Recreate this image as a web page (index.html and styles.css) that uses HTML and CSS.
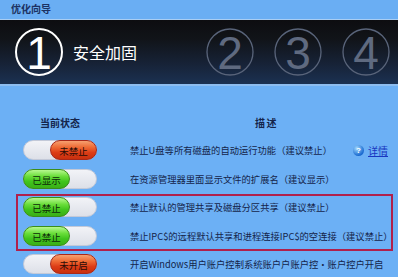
FILE: index.html
```html
<!DOCTYPE html>
<html>
<head>
<meta charset="utf-8">
<link rel="stylesheet" href="styles.css">
</head>
<body>
<div class="win">
  <div class="titlebar">优化向导</div>
  <div class="steps">
    <svg class="num" width="50" height="50" viewBox="0 0 50 50">
      <circle cx="25" cy="25" r="23" fill="none" stroke="#ffffff" stroke-width="2"/>
      <text x="25" y="41.5" text-anchor="middle" class="digit on">1</text>
    </svg>
    <span class="step-title">安全加固</span>
    <div class="todo">
      <svg class="num" width="50" height="50" viewBox="0 0 50 50">
        <circle cx="25" cy="25" r="23" fill="none" stroke="#59647a" stroke-width="1.3"/>
        <text x="25" y="41.5" text-anchor="middle" class="digit off">2</text>
      </svg>
      <svg class="num" width="50" height="50" viewBox="0 0 50 50">
        <circle cx="25" cy="25" r="23" fill="none" stroke="#59647a" stroke-width="1.3"/>
        <text x="25" y="41.5" text-anchor="middle" class="digit off">3</text>
      </svg>
      <svg class="num" width="50" height="50" viewBox="0 0 50 50">
        <circle cx="25" cy="25" r="23" fill="none" stroke="#59647a" stroke-width="1.3"/>
        <text x="25" y="41.5" text-anchor="middle" class="digit off">4</text>
      </svg>
    </div>
  </div>
  <div class="content">
    <div class="head">
      <span class="h-state">当前状态</span>
      <span class="h-desc">描述</span>
    </div>
    <div class="rows">
      <div class="row">
        <div class="toggle right"><span class="knob red">未禁止</span></div>
        <span class="desc">禁止U盘等所有磁盘的自动运行功能（建议禁止）</span>
        <a class="detail"><span class="qicon">?</span><span class="dlink">详情</span></a>
      </div>
      <div class="row">
        <div class="toggle"><span class="knob green">已显示</span></div>
        <span class="desc">在资源管理器里面显示文件的扩展名（建议显示）</span>
      </div>
      <div class="row">
        <div class="toggle"><span class="knob green">已禁止</span></div>
        <span class="desc">禁止默认的管理共享及磁盘分区共享（建议禁止）</span>
      </div>
      <div class="row">
        <div class="toggle"><span class="knob green">已禁止</span></div>
        <span class="desc">禁止IPC$的远程默认共享和进程连接IPC$的空连接（建议禁止）</span>
      </div>
      <div class="row">
        <div class="toggle right"><span class="knob red">未开启</span></div>
        <span class="desc">开启Windows用户账户控制系统账户户账户控·账户控户开启</span>
      </div>
    </div>
  </div>
  <div class="mark"></div>
</div>
</body>
</html>
```

FILE: styles.css
```css
html, body {
  margin: 0;
  padding: 0;
}
body {
  width: 398px;
  height: 277px;
  overflow: hidden;
  background: #6cb0f5;
  font-family: "Noto Sans CJK SC", "Liberation Sans", sans-serif;
}
.win {
  position: relative;
  width: 398px;
  height: 277px;
  overflow: hidden;
  background: #6cb0f5;
}
.titlebar {
  height: 20px;
  box-sizing: border-box;
  line-height: 18px;
  padding-left: 11px;
  font-size: 10px;
  font-weight: bold;
  color: #1c3262;
  background: #6aaef3;
  border-bottom: 1px solid #a9cdf2;
}
.steps {
  height: 64px;
  display: flex;
  align-items: center;
  padding-left: 14px;
  padding-right: 7px;
  background: linear-gradient(#0d0d10 0%, #111419 30%, #172338 70%, #1b3152 100%);
  border-bottom: 2px solid #8dbdf0;
}
.num {
  display: block;
  flex: none;
}
.digit {
  font-family: "Liberation Sans", "DejaVu Sans", sans-serif;
  font-size: 46px;
}
.digit.on { fill: #ffffff; }
.digit.off { fill: #5f6a80; }
.step-title {
  margin-left: 9px;
  font-size: 16px;
  color: #ffffff;
}
.todo {
  margin-left: auto;
  display: flex;
  gap: 18px;
}
.content {
  padding-top: 30px;
}
.head {
  display: flex;
  height: 14px;
  line-height: 14px;
  font-size: 10px;
  font-weight: bold;
  color: #14244a;
}
.h-state {
  margin-left: 40px;
}
.h-desc {
  margin-left: 175px;
  letter-spacing: 1.5px;
}
.rows {
  margin-top: 6px;
}
.row {
  display: flex;
  align-items: center;
  height: 28.5px;
  white-space: nowrap;
}
.toggle {
  flex: none;
  margin-left: 23px;
  width: 74px;
  height: 20px;
  box-sizing: border-box;
  border-radius: 10px;
  border: 1px solid #c3c9d8;
  background: linear-gradient(#f2f3f7, #dde0e8);
  display: flex;
  align-items: stretch;
}
.toggle.right {
  justify-content: flex-end;
}
.knob {
  width: 47px;
  margin: -1px;
  border-radius: 10px;
  box-sizing: border-box;
  font-size: 9.5px;
  line-height: 20px;
  text-align: center;
  color: #1a1a1a;
}
.knob.red {
  border: 1px solid #a8281a;
  background: linear-gradient(#f6a070 0%, #ee6a34 35%, #dc3c16 65%, #c8300e 100%);
  color: #2a0c06;
}
.knob.green {
  border: 1px solid #3a8e1a;
  background: linear-gradient(#b8f890 0%, #6ade3a 35%, #40c41c 65%, #3aae16 100%);
  color: #0c2a08;
}
.desc {
  margin-left: 33px;
  font-size: 9.3px;
  color: #14244a;
}
.detail {
  margin-left: auto;
  margin-right: 10px;
  display: flex;
  align-items: center;
}
.qicon {
  width: 11px;
  height: 11px;
  border-radius: 50%;
  background: radial-gradient(circle at 35% 30%, #9fd8ff, #1a6ad0 70%);
  color: #ffffff;
  font-family: "Liberation Sans", sans-serif;
  font-size: 8px;
  font-weight: bold;
  line-height: 11px;
  text-align: center;
}
.dlink {
  margin-left: 4px;
  font-size: 10px;
  color: #1836c0;
  text-decoration: underline;
}
.mark {
  position: absolute;
  left: 16px;
  top: 194px;
  width: 377px;
  height: 57px;
  box-sizing: border-box;
  border: 2px solid #b0204c;
}
```
